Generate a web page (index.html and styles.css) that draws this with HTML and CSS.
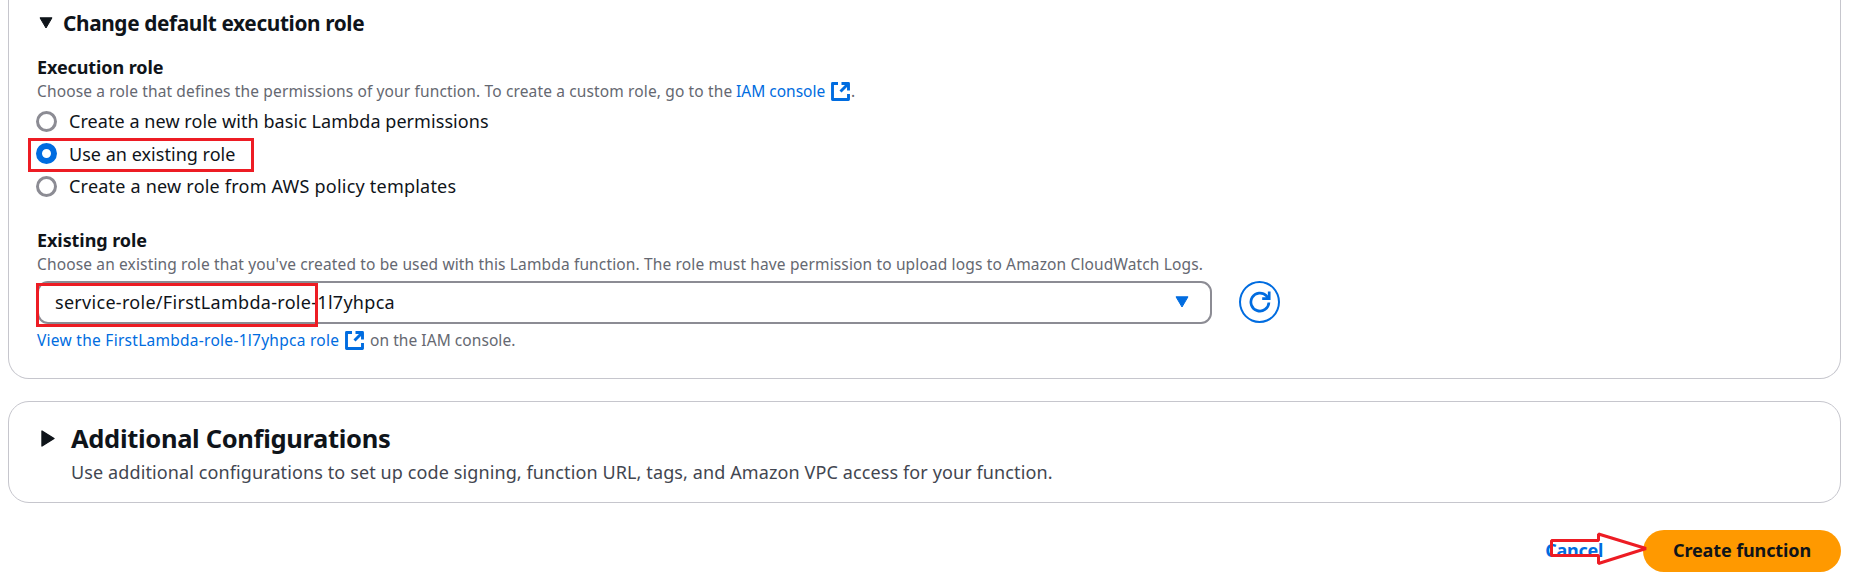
FILE: index.html
```html
<!DOCTYPE html>
<html lang="en">
<head>
<meta charset="utf-8">
<title>Create function</title>
<link rel="stylesheet" href="styles.css">
</head>
<body>
<svg class="sprite" width="0" height="0" aria-hidden="true">
  <symbol id="external" viewBox="0 0 19 19">
    <path d="M7 1.5H1.500v16h16V12M10.500 1.500h7V8.500M17 2l-7.500 7.500" fill="none" stroke="currentColor" stroke-width="2.900" stroke-linejoin="round"/>
  </symbol>
</svg>
<main class="page">
  <section class="card role-card">
    <h3 class="section-title">
      <svg class="caret-down" viewBox="0 0 14 12"><path d="M1 .8h12L7 11z" fill="currentColor" stroke="currentColor" stroke-linejoin="round"/></svg>
      <span>Change default execution role</span>
    </h3>

    <div class="label execution-label">Execution role</div>
    <div class="hint"><span class="intro">Choose a role that defines the permissions of your function. To create a custom role, go to the</span><a class="iam-link">IAM console</a><svg class="external"><use href="#external"/></svg><span class="stop">.</span></div>
    <div class="radios">
      <div class="option"><span class="radio"></span><span class="basic">Create a new role with basic Lambda permissions</span></div>
      <div class="option"><span class="radio checked"></span><span class="existing">Use an existing role</span><i class="mark mark-option"></i></div>
      <div class="option"><span class="radio"></span><span class="templates">Create a new role from AWS policy templates</span></div>
    </div>

    <div class="label existing-label">Existing role</div>
    <div class="hint existing-hint">Choose an existing role that you've created to be used with this Lambda function. The role must have permission to upload logs to Amazon CloudWatch Logs.</div>
    <div class="select-row">
      <div class="select">
        <span>service-role/FirstLambda-role-1l7yhpca</span>
        <svg class="select-caret" viewBox="0 0 14 12"><path d="M1 .8h12L7 11z" fill="currentColor" stroke="currentColor" stroke-linejoin="round"/></svg>
        <i class="mark mark-select"></i>
      </div>
      <button class="refresh" aria-label="Refresh">
        <svg viewBox="0 0 22 22" width="22" height="22"><path d="M19.9 11.5a9 9 0 1 1-2.5-6.7l2 2.4M20.2 .6v7H13.2" fill="none" stroke="currentColor" stroke-width="2.7"/></svg>
      </button>
    </div>
    <div class="hint view-line"><a class="view-link">View the FirstLambda-role-1l7yhpca role</a><svg class="external"><use href="#external"/></svg><span class="console">on the IAM console.</span></div>
  </section>

  <section class="card config-card">
    <svg class="caret-right" viewBox="0 0 14 17"><path d="M1 1v15l12-7.500z" fill="currentColor" stroke="currentColor" stroke-width="1.400" stroke-linejoin="round"/></svg>
    <div>
      <h2 class="config-title">Additional Configurations</h2>
      <p class="config-text">Use additional configurations to set up code signing, function URL, tags, and Amazon VPC access for your function.</p>
    </div>
  </section>

  <footer class="actions">
    <a class="cancel">Cancel</a>
    <button class="create">Create function</button>
    <svg class="arrow" viewBox="0 0 100 36" width="100" height="36"><path d="M2.500 9.500H49.500V3L97 17.500L49.500 32.500V24.500H2.500Z" fill="none" stroke="#ed1c24" stroke-width="3" stroke-linejoin="bevel"/></svg>
  </footer>
</main>
</body>
</html>
```

FILE: styles.css
```css
* { box-sizing: border-box; }
body {
  margin: 0;
  background: #fff;
  color: #0f141a;
  font-family: "Noto Sans", sans-serif;
  font-size: 18px;
  overflow: hidden;
}
h2, h3, p { margin: 0; }
svg { display: block; flex: none; }
span, a { white-space: nowrap; }
a { color: #006ce0; }
.sprite { position: absolute; }
.page { padding: 0 20px 0 8px; }
.card { border: 1px solid #c6c6cd; border-radius: 21px; }
.role-card {
  height: 379px;
  padding: 8px 28px 0;
  border-top: 0;
  border-radius: 0 0 21px 21px;
}

.section-title {
  display: flex;
  align-items: center;
  gap: 10px;
  height: 30px;
  padding-left: 2px;
  font-size: 20.8px;
  line-height: 30px;
  letter-spacing: -0.37px;
}
.caret-down { width: 14px; height: 12px; }
.label { height: 24px; font-weight: 700; line-height: 24px; }
.execution-label { margin-top: 17px; letter-spacing: -0.1px; }
.existing-label { margin-top: 25px; letter-spacing: -0.07px; }
.hint {
  display: flex;
  height: 20px;
  margin-top: 2px;
  color: #656871;
  font-size: 15.5px;
  line-height: 20px;
  letter-spacing: 0.136px;
  white-space: nowrap;
}
.intro { width: 699px; }
.iam-link { width: 95px; letter-spacing: 0; }
.external { width: 19px; height: 19px; margin-top: 1px; color: #006ce0; }
.stop { margin-left: 1px; }

.radios { margin-top: 4px; }
.option {
  position: relative;
  display: flex;
  align-items: center;
  gap: 12px;
  height: 32.6px;
  margin-left: -1px;
}
.radio {
  width: 21px;
  height: 21px;
  border: 3px solid #8c8c94;
  border-radius: 50%;
}
.checked { border: 6.5px solid #006ce0; }
.basic { letter-spacing: 0.06px; }
.existing { letter-spacing: 0.03px; }
.templates { letter-spacing: 0.215px; }

.mark { position: absolute; border: 3px solid #ed1c24; }
.mark-option { left: -8px; top: 0; width: 226px; height: 34px; }
.mark-select { left: -3px; top: 0; width: 282px; height: 44px; }

.existing-hint { letter-spacing: 0.141px; }
.select-row { display: flex; gap: 27px; margin-top: 7px; }
.select {
  position: relative;
  display: flex;
  align-items: center;
  justify-content: space-between;
  width: 1175px;
  height: 43px;
  padding: 0 21px 0 16px;
  border: 2px solid #8c8c94;
  border-radius: 11px;
  letter-spacing: 0.292px;
}
.select-caret { width: 14px; height: 12px; color: #006ce0; }
.refresh {
  display: flex;
  align-items: center;
  justify-content: center;
  width: 41px;
  height: 42px;
  padding: 0;
  border: 2px solid #006ce0;
  border-radius: 50%;
  background: #fff;
  color: #006ce0;
}
.view-line { margin-top: 6px; }
.view-link { width: 308px; letter-spacing: 0.27px; }
.console { margin-left: 6px; letter-spacing: 0.06px; }

.config-card {
  display: flex;
  gap: 16px;
  height: 102px;
  margin-top: 22px;
  padding: 19px 32px 0;
}
.caret-right { width: 14px; height: 17px; margin-top: 9px; }
.config-title {
  height: 34px;
  font-size: 25.5px;
  line-height: 34px;
  letter-spacing: -0.32px;
}
.config-text {
  margin-top: 5px;
  color: #424650;
  line-height: 24px;
  letter-spacing: 0.112px;
}

.actions {
  position: relative;
  display: flex;
  align-items: center;
  justify-content: flex-end;
  gap: 40px;
  margin-top: 27px;
}
.cancel { padding-bottom: 2px; font-weight: 700; letter-spacing: -0.3px; }
.create {
  width: 198px;
  height: 42px;
  padding: 0 0 2px;
  border: 0;
  border-radius: 21px;
  background: #ff9900;
  color: #0f141a;
  font: 700 18px "Noto Sans", sans-serif;
  letter-spacing: -0.12px;
}
.arrow { position: absolute; right: 192px; top: 1px; }
```
